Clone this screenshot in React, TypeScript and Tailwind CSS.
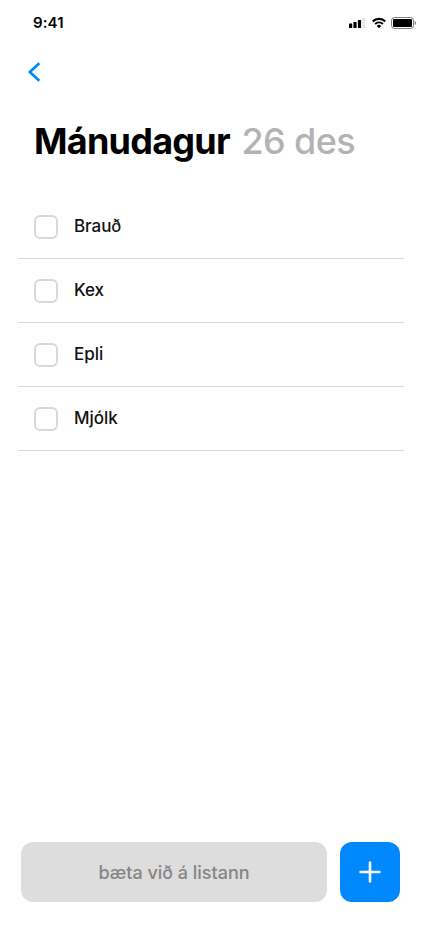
const items = ["Brauð", "Kex", "Epli", "Mjólk"];

function StatusBar() {
  return (
    <div className="flex h-[46px] items-center justify-between pl-[33px] pr-[14px]">
      <span className="text-[15px] leading-5 font-semibold tracking-[0.1px]">9:41</span>
      <div className="flex items-center">
        <svg width="17" height="12" viewBox="0 0 17 12">
          <rect x="0" y="6.500" width="3.200" height="4.500" rx="0.4" />
          <rect x="4.400" y="5" width="3.200" height="6" rx="0.4" />
          <rect x="8.900" y="3" width="3.200" height="8" rx="0.4" />
          <rect x="13.300" y="1" width="3.200" height="10" rx="0.4" fillOpacity="0.1" />
        </svg>
        <svg className="ml-[6px]" width="14" height="12" viewBox="0 0 14 12" fill="none" stroke="#000">
          <path d="M.7 4.300a9.200 9.200 0 0 1 12.600 0" strokeWidth="2.300" />
          <path d="M3.100 6.900a5.800 5.800 0 0 1 7.800 0" strokeWidth="2" />
          <path d="M7 11.300 4.700 9a3.200 3.200 0 0 1 4.600 0Z" fill="#000" stroke="none" />
        </svg>
        <svg className="ml-[5px]" width="25" height="12" viewBox="0 0 25 12">
          <rect x="0.5" y="0.5" width="22" height="11" rx="3" fill="none" stroke="#000" strokeOpacity="0.5" />
          <rect x="2" y="2" width="19" height="8" rx="1" />
          <path d="M23.700 4v4c.8-.3 1.300-1.100 1.300-2s-.5-1.700-1.300-2Z" fillOpacity="0.5" />
        </svg>
      </div>
    </div>
  );
}

export default function App() {
  return (
    <main className="flex h-[932px] w-[430px] flex-col bg-white font-['Inter',sans-serif] text-black">
      <StatusBar />
      <button className="mt-[15px] ml-[27px] h-[22px] w-[14px]" aria-label="Til baka">
        <svg width="14" height="22" viewBox="0 0 14 22" fill="none">
          <path d="M12.300 2.200 2.800 11l9.500 8.800" stroke="#0088FF" strokeWidth="2.700" />
        </svg>
      </button>
      <h1 className="mt-[35px] ml-[34px] flex gap-[11.5px] text-[36px] leading-[46px] whitespace-nowrap">
        <span className="font-bold tracking-[-0.75px]">Mánudagur</span>
        <span className="font-medium tracking-[-0.6px] text-[#b3b3b3]">26 des</span>
      </h1>
      <ul className="mt-[31px] mr-[26px] ml-[18px]">
        {items.map((item) => (
          <li key={item} className="flex h-16 items-center border-b border-[#d9d9d9] pl-4">
            <span className="h-6 w-6 rounded-md border-2 border-[#d9d9d9]" />
            <span className="mb-[2px] ml-4 text-[17px] leading-6 font-[450] tracking-[-0.05px] text-[#111]">{item}</span>
          </li>
        ))}
      </ul>
      <div className="mt-auto mb-[30px] ml-[21px] flex gap-[13px]">
        <div className="flex h-[60px] w-[306px] items-center justify-center rounded-xl bg-[#ddd] text-[18px] font-[450] text-[#858585]">
          bæta við á listann
        </div>
        <button className="flex h-[60px] w-[60px] items-center justify-center rounded-xl bg-[#0088FF]" aria-label="Bæta við">
          <svg width="22" height="22" viewBox="0 0 22 22" stroke="#fff" strokeWidth="2.600" strokeLinecap="round">
            <path d="M11 1.600v18.800M1.600 11h18.800" />
          </svg>
        </button>
      </div>
    </main>
  );
}
